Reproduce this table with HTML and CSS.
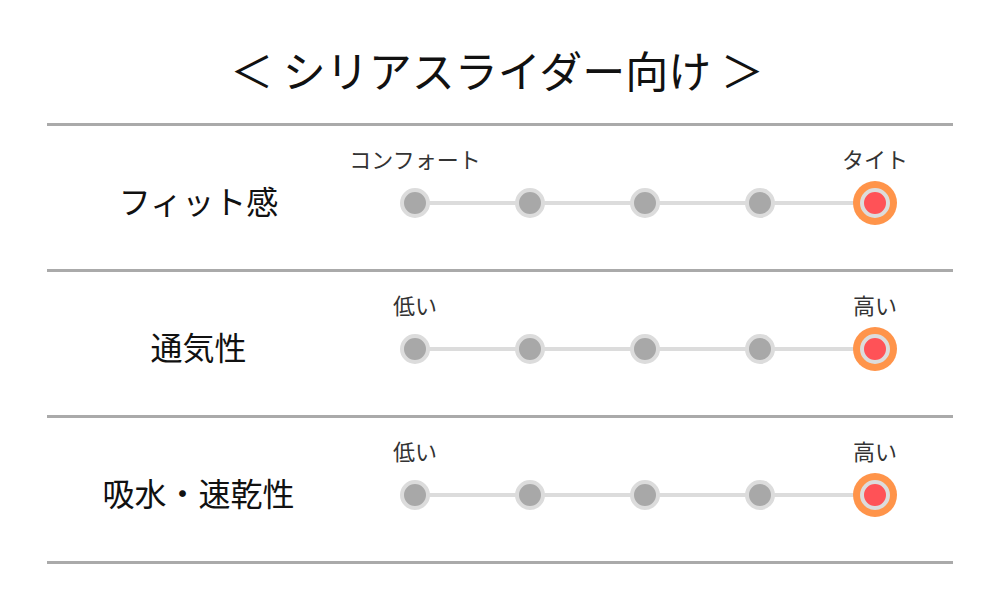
FILE: index.html
```html
<!DOCTYPE html>
<html lang="ja">
<head>
<meta charset="utf-8">
<link rel="stylesheet" href="styles.css">
</head>
<body>
<div class="wrap">
  <h1 class="title">＜ シリアスライダー向け ＞</h1>
  <div class="row">
    <div class="label">フィット感</div>
    <div class="slider">
      <div class="ends"><span>コンフォート</span><span>タイト</span></div>
      <div class="dots">
        <div class="cell"><i class="dot"></i></div>
        <div class="cell"><i class="dot"></i></div>
        <div class="cell"><i class="dot"></i></div>
        <div class="cell"><i class="dot"></i></div>
        <div class="cell"><i class="dot on"></i></div>
      </div>
    </div>
  </div>
  <div class="row">
    <div class="label">通気性</div>
    <div class="slider">
      <div class="ends"><span>低い</span><span>高い</span></div>
      <div class="dots">
        <div class="cell"><i class="dot"></i></div>
        <div class="cell"><i class="dot"></i></div>
        <div class="cell"><i class="dot"></i></div>
        <div class="cell"><i class="dot"></i></div>
        <div class="cell"><i class="dot on"></i></div>
      </div>
    </div>
  </div>
  <div class="row last">
    <div class="label">吸水・速乾性</div>
    <div class="slider">
      <div class="ends"><span>低い</span><span>高い</span></div>
      <div class="dots">
        <div class="cell"><i class="dot"></i></div>
        <div class="cell"><i class="dot"></i></div>
        <div class="cell"><i class="dot"></i></div>
        <div class="cell"><i class="dot"></i></div>
        <div class="cell"><i class="dot on"></i></div>
      </div>
    </div>
  </div>
</div>
</body>
</html>
```
FILE: styles.css
```css
html, body {
  margin: 0;
  padding: 0;
  background: #fff;
}
body {
  font-family: "Noto Sans CJK JP", "Noto Sans", sans-serif;
  color: #111;
}
.wrap {
  width: 906px;
  margin-left: 47px;
}
.title {
  margin: 0;
  height: 123px;
  box-sizing: border-box;
  padding-top: 45px;
  line-height: 48px;
  font-size: 43px;
  font-weight: 400;
  text-align: center;
  padding-right: 6px;
  white-space: nowrap;
}
.row {
  display: flex;
  height: 146px;
  box-sizing: border-box;
  border-top: 3px solid #aaa;
}
.row.last {
  border-bottom: 3px solid #aaa;
  height: 149px;
}
.label {
  width: 303px;
  display: flex;
  align-items: center;
  justify-content: center;
  font-size: 32px;
  padding-top: 4px;
  box-sizing: border-box;
}
.slider {
  margin-left: 7.5px;
  width: 575px;
  display: flex;
  flex-direction: column;
}
.ends {
  display: flex;
  justify-content: space-between;
  padding-top: 18px;
  height: 28px;
  line-height: 28px;
  font-size: 22px;
  color: #333;
}
.ends span {
  width: 115px;
  text-align: center;
  white-space: nowrap;
  display: flex;
  justify-content: center;
}
.dots {
  position: relative;
  display: flex;
  height: 62px;
}
.dots::before {
  content: "";
  position: absolute;
  left: 57.5px;
  right: 57.5px;
  top: 29px;
  height: 4px;
  background: #dcdcdc;
}
.cell {
  width: 115px;
  display: flex;
  align-items: center;
  justify-content: center;
  position: relative;
}
.dot {
  display: block;
  width: 22px;
  height: 22px;
  border: 4px solid #dcdcdc;
  border-radius: 50%;
  background: #a8a8a8;
}
.dot.on {
  background: #ff5257;
  box-shadow: 0 0 0 7px #ff944a;
}
```
